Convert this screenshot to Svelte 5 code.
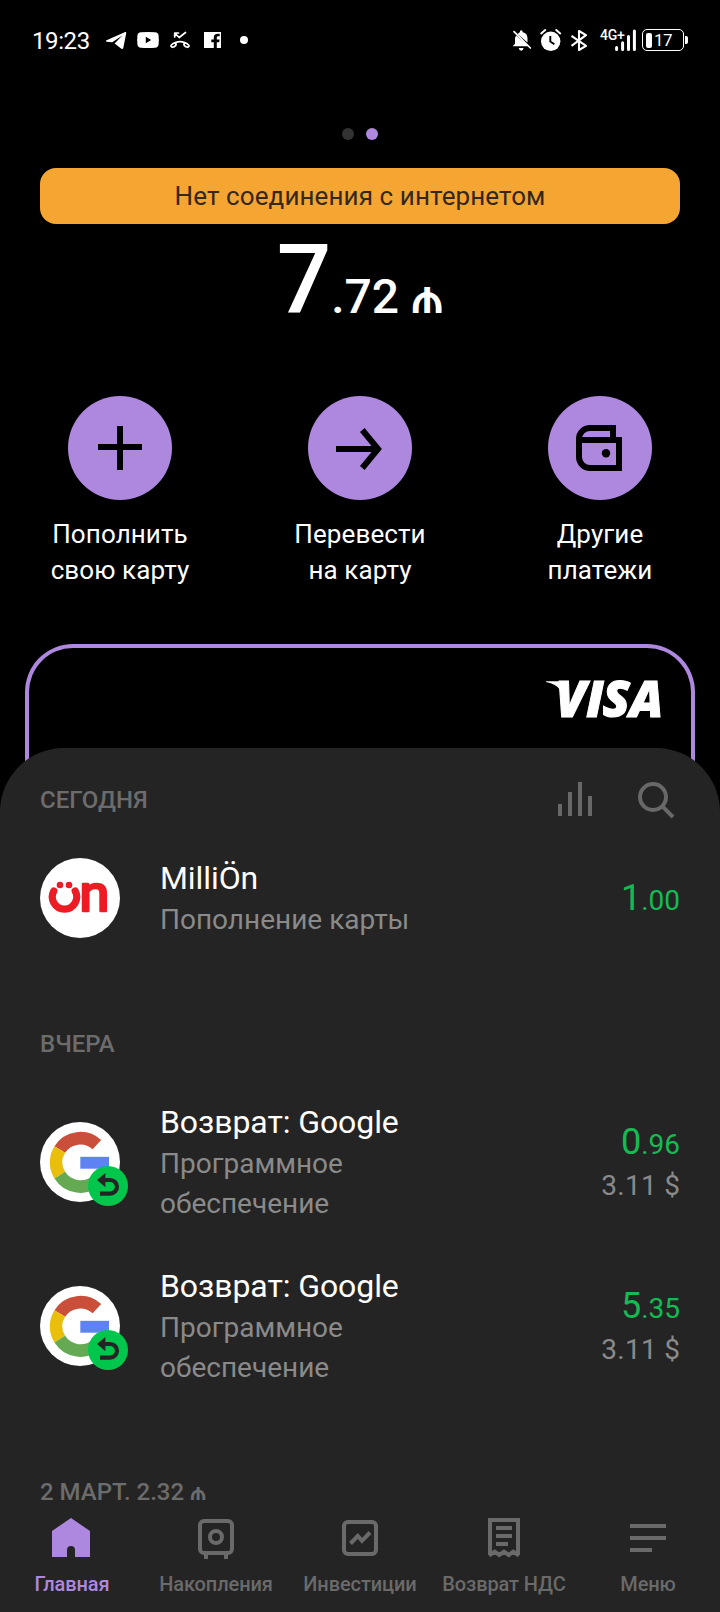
<script>
  const actions = [
    { icon: 'plus', lines: ['Пополнить', 'свою карту'] },
    { icon: 'arrow', lines: ['Перевести', 'на карту'] },
    { icon: 'wallet', lines: ['Другие', 'платежи'] }
  ];

  const groups = [
    {
      date: 'СЕГОДНЯ',
      tools: true,
      items: [{ logo: 'on', title: 'MilliÖn', sub: ['Пополнение карты'], whole: '1', cents: '.00' }]
    },
    {
      date: 'ВЧЕРА',
      items: [
        { logo: 'google', title: 'Возврат: Google', sub: ['Программное', 'обеспечение'], whole: '0', cents: '.96', orig: '3.11 $' },
        { logo: 'google', title: 'Возврат: Google', sub: ['Программное', 'обеспечение'], whole: '5', cents: '.35', orig: '3.11 $' }
      ]
    },
    { date: '2 МАРТ. 2.32 ₼', items: [] }
  ];

  const tabs = [
    { icon: 'home', label: 'Главная', active: true },
    { icon: 'safe', label: 'Накопления' },
    { icon: 'invest', label: 'Инвестиции' },
    { icon: 'receipt', label: 'Возврат НДС' },
    { icon: 'menu', label: 'Меню' }
  ];
</script>

<div class="screen">
  <header class="status">
    <div class="status-left">
      <span class="time">19:23</span>
      <svg width="160" height="32" viewBox="100 24 160 32" fill="#fff">
        <path d="M106 40.6 125.2 32.1Q126.5 31.8 126.2 33.2L123.3 48Q122.8 49.6 121.4 48.7L114.6 43.6 122.4 35.4 112.2 42.2 106.6 41.8Q105.6 41.2 106 40.6Z" />
        <path fill-rule="evenodd" d="M141 32.2Q148 31.7 155 32.2 158.3 32.4 158.6 35.4 159.1 40 158.6 44.6 158.3 47.5 155 47.8 148 48.3 141 47.8 137.8 47.5 137.4 44.6 136.9 40 137.4 35.4 137.8 32.4 141 32.2ZM145.8 36.8V43.2L151.2 40Z" />
        <g fill="none" stroke="#fff" stroke-width="1.7" stroke-linecap="round" stroke-linejoin="round">
          <path d="M174.7 37V33H178.5M175 33.3 179.2 37.5 185.5 32.5" />
          <path d="M175.5 42.6Q180 40.6 184.5 42.6M175.5 42.6Q177 45 174.5 46.6L172.4 47.3Q170.4 46.6 171.2 45.2 173 43.2 175.5 42.6M184.5 42.6Q183 45 185.5 46.6L187.6 47.3Q189.6 46.6 188.8 45.2 187 43.2 184.5 42.6" />
        </g>
        <path d="M204 32H221V48H216.8V42.2H219.2L219.6 39.4H216.8V37.6Q216.8 36.2 218.3 36.2H219.7V33.8Q213.8 32.9 213.8 37.3V39.4H211.3V42.2H213.8V48H204Z" />
        <circle cx="244" cy="40" r="4" />
      </svg>
    </div>
    <div class="status-right">
      <svg width="80" height="32" viewBox="510 24 80 32" fill="#fff">
        <path d="M516.2 35.5 528.5 46.2H513Q512.7 45.2 515 44V38.5Q515.1 36.8 516.2 35.5ZM517.6 34Q518.8 32.6 519.8 32.2 519.8 30.2 521.3 30.2 522.7 30.2 522.7 32.2 527.5 33.2 527.5 38.5V42.6ZM518.7 48H523.6Q523.2 50.7 521.2 50.7 519.2 50.7 518.7 48Z" />
        <path d="M514 31.6 530.4 48" stroke="#fff" stroke-width="1.7" stroke-linecap="round" />
        <circle cx="550.7" cy="41.3" r="9.7" />
        <path d="M541.2 33.4 545.2 30M556.2 30 560.2 33.4" stroke="#fff" stroke-width="2" stroke-linecap="round" />
        <path d="M550.3 36V41.6L554.4 44.2" fill="none" stroke="#000" stroke-width="1.9" />
        <path d="M571.5 35.8 586 45.8 579 50V31L586 35.2 571.5 45.8" fill="none" stroke="#fff" stroke-width="2.1" stroke-linejoin="round" />
      </svg>
      <span class="net">4G+</span>
      <svg class="bars" width="24" height="32" viewBox="614 24 24 32" stroke="#fff" stroke-width="3" stroke-linecap="round">
        <path d="M616.6 47.5V49.5M622.6 42.7V49.5M628.5 36.5V49.5M634.4 31V49.5" />
      </svg>
      <div class="battery"><i></i><span>17</span></div>
      <b class="tip"></b>
    </div>
  </header>

  <div class="pager"><i></i><i class="on"></i></div>

  <div class="banner">Нет соединения с интернетом</div>

  <div class="balance">7<span>.72 ₼</span></div>

  <div class="actions">
    {#each actions as a}
      <div class="action">
        <div class="disc">
          <svg width="104" height="104" viewBox="0 0 104 104" fill="none" stroke="#000" stroke-width="6">
            {#if a.icon === 'plus'}
              <path d="M30 51H74M52 30V74" />
            {:else if a.icon === 'arrow'}
              <path d="M28 53H70M54.3 34 70 53 54.3 72" />
            {:else}
              <path d="M65 44V32H42A11 11 0 0 0 31 43V61A11 11 0 0 0 42 72H71V44H31" />
              <circle cx="58" cy="57.3" r="4.2" fill="#000" stroke="none" />
            {/if}
          </svg>
        </div>
        <div class="caption">
          {#each a.lines as line}<div>{line}</div>{/each}
        </div>
      </div>
    {/each}
  </div>

  <div class="card">
    <svg width="140" height="82" viewBox="538 658 140 82" fill="#fff">
      <path d="M546 681.2H563Q565.8 681.4 566.3 684L568.5 696 560 690Q556.5 683.8 546 682Z" />
      <text class="visa" x="555.5 586 602.5 629.5" y="717.3">VISA</text>
    </svg>
  </div>

  <main class="sheet">
    {#each groups as g}
      <section>
        <div class="date" class:first={g.tools}>
          <span>{g.date}</span>
          {#if g.tools}
            <div class="tools">
              <svg width="40" height="40" viewBox="0 0 40 40" stroke="#686868" stroke-width="4">
                <path d="M4 24V36M14 12V36M24 2V36M34 16V36" />
              </svg>
              <svg width="40" height="40" viewBox="0 0 40 40" fill="none" stroke="#686868" stroke-width="4">
                <circle cx="17" cy="17" r="13" /><path d="M26.2 26.2 37 37" />
              </svg>
            </div>
          {/if}
        </div>
        {#each g.items as t}
          <article class="row">
            <div class="avatar">
              {#if t.logo === 'on'}
                <svg width="80" height="80" viewBox="0 0 80 80">
                  <path d="M13.8 33A12.2 12.2 0 1 0 35.2 33" fill="none" stroke="#ec1c24" stroke-width="7.2" stroke-linecap="round" />
                  <circle cx="20" cy="27" r="3.3" fill="#ec1c24" />
                  <circle cx="29" cy="27" r="3.3" fill="#ec1c24" />
                  <text class="n" transform="translate(39.6 53.2) scale(1.08 1)">n</text>
                </svg>
              {:else}
                <svg width="80" height="80" viewBox="0 0 80 80" fill="none" stroke-width="12.6">
                  <path d="M56.9 22.7A24.3 24.3 0 0 0 19.8 27.5" stroke="#c94f3b" />
                  <path d="M19.8 27.5A24.3 24.3 0 0 0 19.8 53.2" stroke="#eabf0b" />
                  <path d="M19.8 53.2A24.3 24.3 0 0 0 57 58" stroke="#66a953" />
                  <path d="M40.3 34.8H69V46.7H40.3Z" fill="#5e81f4" />
                </svg>
                <div class="badge">
                  <svg width="40" height="40" viewBox="0 0 40 40">
                    <path d="M9 14 17.4 7V21.2Z" fill="#242424" />
                    <path d="M15 14H22.2A6.8 6.8 0 0 1 22.2 27.6H12" fill="none" stroke="#242424" stroke-width="4.2" />
                  </svg>
                </div>
              {/if}
            </div>
            <div class="info">
              <div class="title">{t.title}</div>
              {#each t.sub as s}<div class="sub">{s}</div>{/each}
            </div>
            <div class="sum">
              <div class="amount" class:tall={t.orig}>{t.whole}<span>{t.cents}</span></div>
              {#if t.orig}<div class="orig">{t.orig}</div>{/if}
            </div>
          </article>
        {/each}
      </section>
    {/each}
  </main>

  <nav>
    {#each tabs as t}
      <div class="tab" class:active={t.active}>
        <svg width="48" height="48" viewBox="0 0 48 48" fill="none" stroke="currentColor" stroke-width="4">
          {#if t.icon === 'home'}
            <path d="M23 4 42 17V43H27V36A4 4 0 0 0 19 36V43H4V17Z" fill="currentColor" stroke="none" />
          {:else if t.icon === 'safe'}
            <rect x="8" y="7" width="32" height="32" rx="4" /><circle cx="24" cy="23" r="6" />
            <path d="M14 40V45M34 40V45" />
          {:else if t.icon === 'invest'}
            <rect x="8" y="8" width="32" height="32" rx="4" />
            <path d="M14.5 29.5 21.8 22 26 26.8 34 18.5" />
          {:else if t.icon === 'receipt'}
            <path d="M10 41V6H38V41M16 14H32M16 22H32M16 30H28" />
            <path d="M9 41.5 14.7 37.7 19.3 41 24 37.7 28.7 41 33.3 37.7 39 41.5" />
          {:else}
            <path d="M6 12H42M6 24H42M6 36H28" />
          {/if}
        </svg>
        <span>{t.label}</span>
      </div>
    {/each}
  </nav>
</div>

<style>
  :global(body) { margin: 0; background: #000; }
  .screen {
    width: 720px; height: 1612px; overflow: hidden; background: #000; color: #fff;
    font-family: Roboto, "Noto Sans", sans-serif; display: flex; flex-direction: column;
  }
  .screen > * { flex-shrink: 0; }
  svg { display: block; }

  .status { height: 80px; display: flex; justify-content: space-between; align-items: center; padding: 0 32px; }
  .status-left, .status-right { display: flex; align-items: center; }
  .time { width: 68px; font-size: 24px; line-height: 32px; padding-top: 2px; letter-spacing: -0.4px; }
  .net { width: 24px; margin-left: 10px; padding-bottom: 10px; font-size: 14px; line-height: 14px; font-weight: 500; letter-spacing: -0.2px; white-space: nowrap; }
  .bars { margin-left: -10px; }
  .battery {
    box-sizing: border-box; width: 42px; height: 22px; margin-left: 4px; border: 1.5px solid #fff; border-radius: 5px;
    display: flex; align-items: center; padding-left: 3px;
  }
  .battery i { width: 6px; height: 15px; border-radius: 2px; background: #fff; }
  .battery span { margin-left: 2px; font-size: 17px; line-height: 18px; letter-spacing: -0.6px; }
  .tip { width: 3px; height: 8px; margin-left: 1px; border-radius: 0 2px 2px 0; background: #fff; }

  .pager { display: flex; justify-content: center; gap: 12px; margin-top: 48px; }
  .pager i { width: 12px; height: 12px; border-radius: 50%; background: #333; }
  .pager .on { background: #ae88df; }

  .banner {
    height: 56px; margin: 28px 40px 0; border-radius: 16px; background: #f5a531; color: #33281a;
    text-align: center; font-size: 26px; line-height: 56px; letter-spacing: 0.1px;
  }
  .balance { height: 112px; text-align: center; font-size: 96px; line-height: 112px; font-weight: 500; }
  .balance span { font-size: 48px; line-height: 1; }

  .actions { display: grid; grid-template-columns: repeat(3, 1fr); margin-top: 60px; }
  .action { display: flex; flex-direction: column; align-items: center; }
  .disc { width: 104px; height: 104px; border-radius: 50%; background: #ae88df; }
  .caption { margin-top: 16px; text-align: center; font-size: 26px; line-height: 36px; letter-spacing: 0.1px; }

  .card {
    box-sizing: border-box; height: 130px; margin: 56px 25px -26px; border: 4px solid #ae88df; border-bottom: 0;
    border-radius: 48px 48px 0 0; display: flex; justify-content: flex-end; padding: 10px 13px 0 0;
  }
  .card svg { overflow: visible; }
  .visa { font: italic 800 50px "Open Sans", sans-serif; stroke: #fff; stroke-width: 1; }

  .sheet { position: relative; height: 760px; background: #242424; border-radius: 64px 64px 0 0; overflow: hidden; }
  .date {
    display: flex; justify-content: space-between; align-items: center; height: 32px; margin: 89px 44px 41px 40px;
    color: #6c6c6c; font-size: 24px; line-height: 32px; font-weight: 500;
  }
  .date.first { height: 104px; margin-top: 0; margin-bottom: 5px; }
  .tools { display: flex; gap: 40px; }
  .row { display: flex; align-items: center; padding: 0 40px; }
  .row + .row { margin-top: 42px; }
  .avatar { position: relative; width: 80px; height: 80px; border-radius: 50%; background: #fff; }
  .n { font: 400 50px Roboto, sans-serif; fill: #ec1c24; stroke: #ec1c24; stroke-width: 2.7; stroke-linejoin: round; }
  .badge { position: absolute; left: 48px; top: 44px; width: 40px; height: 40px; border-radius: 50%; background: #00c74c; }
  .info { flex: 1; margin-left: 40px; }
  .title { font-size: 32px; line-height: 42px; letter-spacing: -0.08px; }
  .sub { position: relative; top: 1px; color: #8a8a8a; font-size: 28px; line-height: 40px; }
  .sum { text-align: right; }
  .amount { color: #14bb55; font-size: 36px; line-height: 40px; height: 40px; }
  .amount.tall { height: 46px; line-height: 46px; }
  .amount span { font-size: 28px; line-height: 1; }
  .orig { position: relative; top: 1px; color: #8a8a8a; font-size: 28px; line-height: 40px; letter-spacing: 0.3px; margin-right: -0.3px; }

  nav { position: relative; height: 104px; display: grid; grid-template-columns: repeat(5, 1fr); background: #242424; }
  .tab { display: flex; flex-direction: column; align-items: center; padding-top: 6px; color: #6a6a6a; }
  .tab span { margin-top: 10px; font-size: 20px; line-height: 24px; font-weight: 500; letter-spacing: -0.1px; white-space: nowrap; }
  .tab.active { color: #ae88df; }
</style>
